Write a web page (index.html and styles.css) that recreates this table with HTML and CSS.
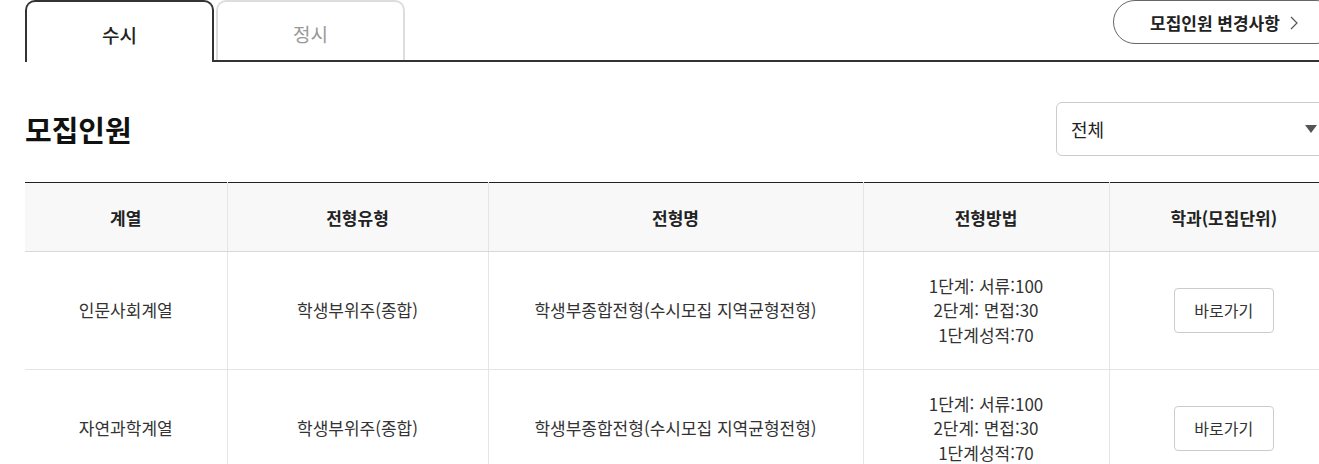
FILE: index.html
```html
<!DOCTYPE html>
<html lang="ko">
<head>
<meta charset="utf-8">
<link rel="stylesheet" href="styles.css">
</head>
<body>
<div class="page">
  <div class="tabs">
    <div class="tab active">수시</div>
    <div class="tab">정시</div>
    <a class="change-btn">모집인원 변경사항
      <svg class="chev" width="8" height="14" viewBox="0 0 8 14"><path d="M1 1 L7 7 L1 13" fill="none" stroke="#555" stroke-width="1.2"/></svg>
    </a>
  </div>

  <div class="title-row">
    <h2 class="title">모집인원</h2>
    <div class="select">
      <span>전체</span>
      <svg width="12" height="8" viewBox="0 0 12 8"><path d="M0 0 H12 L6 8 Z" fill="#555"/></svg>
    </div>
  </div>

  <table class="grid">
    <colgroup>
      <col class="c1"><col class="c2"><col class="c3"><col class="c4"><col class="c5">
    </colgroup>
    <thead>
      <tr>
        <th>계열</th><th>전형유형</th><th>전형명</th><th>전형방법</th><th>학과(모집단위)</th>
      </tr>
    </thead>
    <tbody>
      <tr>
        <td>인문사회계열</td>
        <td>학생부위주(종합)</td>
        <td>학생부종합전형(수시모집 지역균형전형)</td>
        <td>1단계: 서류:100<br>2단계: 면접:30<br>1단계성적:70</td>
        <td><a class="go">바로가기</a></td>
      </tr>
      <tr>
        <td>자연과학계열</td>
        <td>학생부위주(종합)</td>
        <td>학생부종합전형(수시모집 지역균형전형)</td>
        <td>1단계: 서류:100<br>2단계: 면접:30<br>1단계성적:70</td>
        <td><a class="go">바로가기</a></td>
      </tr>
    </tbody>
  </table>
</div>
</body>
</html>
```

FILE: styles.css
```css
* { box-sizing: border-box; }
html, body { margin: 0; padding: 0; background: #fff; overflow: hidden; }
body {
  font-family: "Noto Sans CJK KR", "Noto Sans", sans-serif;
  color: #333;
}
.page {
  width: 1338px;
  padding-left: 25px;
}
.tabs {
  display: flex;
  height: 62px;
  border-bottom: 2px solid #333;
  gap: 2px;
}
.tab {
  width: 189px;
  height: 60px;
  border: 2px solid #ddd;
  border-bottom: none;
  border-radius: 10px 10px 0 0;
  background: #fff;
  display: flex;
  align-items: center;
  justify-content: center;
  font-size: 19px;
  color: #999;
  padding-top: 4px;
}
.tab.active {
  height: 62px;
  margin-bottom: -2px;
  border-color: #333;
  color: #222;
  font-weight: 500;
}
.change-btn {
  margin-left: auto;
  align-self: flex-start;
  width: 225px;
  height: 44px;
  border: 1px solid #666;
  border-radius: 22px;
  display: flex;
  align-items: center;
  padding-left: 36px;
  gap: 10px;
  font-size: 17px;
  font-weight: 700;
  color: #222;
}
.chev { margin-top: 1px; }
.title-row {
  display: flex;
  justify-content: space-between;
  align-items: center;
  margin-top: 40px;
  height: 54px;
}
.title {
  margin: 0;
  font-size: 29px;
  font-weight: 700;
  color: #111;
}
.select {
  width: 282px;
  height: 54px;
  border: 1px solid #ccc;
  border-radius: 6px;
  display: flex;
  align-items: center;
  justify-content: space-between;
  padding: 0 20px 0 14px;
  font-size: 18px;
  color: #222;
}
.grid {
  margin-top: 26px;
  width: 1313px;
  border-collapse: collapse;
  table-layout: fixed;
  border-top: 1px solid #222;
}
.c1 { width: 202px; }
.c2 { width: 261px; }
.c3 { width: 375px; }
.c4 { width: 246px; }
.c5 { width: 229px; }
.grid th {
  height: 69px;
  background: #f8f8f8;
  font-size: 17px;
  font-weight: 700;
  color: #222;
  border-bottom: 1px solid #d8d8d8;
  border-left: 1px solid #e5e5e5;
  padding: 0;
}
.grid td {
  height: 118px;
  text-align: center;
  font-size: 17px;
  line-height: 24.5px;
  color: #333;
  border-bottom: 1px solid #e5e5e5;
  border-left: 1px solid #e5e5e5;
  padding: 0;
}
.grid th:first-child, .grid td:first-child { border-left: none; }
.go {
  display: inline-flex;
  align-items: center;
  justify-content: center;
  width: 100px;
  height: 45px;
  border: 1px solid #ccc;
  border-radius: 4px;
  font-size: 16px;
  color: #333;
}
```
